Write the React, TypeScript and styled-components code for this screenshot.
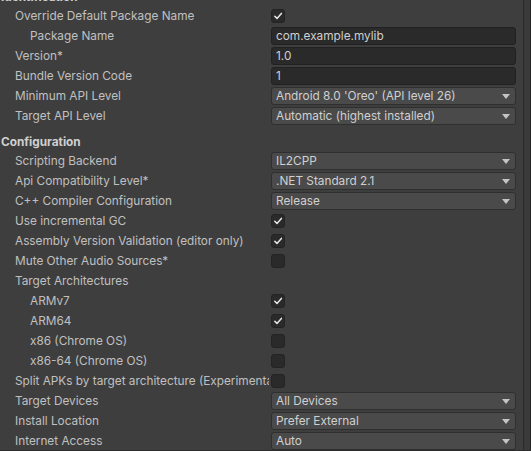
import * as React from 'react';
import styled, { createGlobalStyle } from 'styled-components';

const GlobalStyle = createGlobalStyle`
  html, body {
    margin: 0;
    padding: 0;
    background: #3e3e3e;
    overflow: hidden;
  }
  body {
    font-family: Inter, "Noto Sans", sans-serif;
    font-size: 11.8px;
    color: #c0c0c0;
  }
`;

const Window = styled.div`
  display: flex;
  width: 531px;
  height: 451px;
  box-sizing: border-box;
  border-bottom: 1px solid #2c2c2c;
  overflow: hidden;
  background: #3e3e3e;
`;

const Content = styled.div`
  flex: 1;
  display: flex;
  flex-direction: column;
  margin-top: -19px;
  padding-right: 6px;
`;

const Edge = styled.div`
  width: 6px;
  margin-left: 1px;
  border-left: 1px solid #2a2a2a;
  border-right: 1px solid #242424;
  background: #3a3a3a;
`;

const Header = styled.div`
  flex-shrink: 0;
  height: 25px;
  display: flex;
  align-items: flex-end;
  padding: 0 0 2px 1px;
  box-sizing: border-box;
  font-weight: 700;
  color: #d0d0d0;
`;

const Row = styled.div`
  flex-shrink: 0;
  height: 20px;
  display: grid;
  grid-template-columns: 269px 1fr;
  column-gap: 2px;
  align-items: center;
`;

const Label = styled.div<{ $indent?: boolean }>`
  padding-left: ${(p) => (p.$indent ? 30 : 15)}px;
  white-space: nowrap;
  overflow: hidden;
`;

const TextField = styled.div`
  height: 18px;
  box-sizing: border-box;
  display: flex;
  align-items: center;
  padding-left: 4px;
  background: #2a2a2a;
  border: 1px solid #212121;
  border-radius: 3px;
  color: #d0d0d0;
`;

const Popup = styled.div`
  height: 18px;
  box-sizing: border-box;
  display: flex;
  align-items: center;
  justify-content: space-between;
  padding: 0 4px 0 4px;
  background: #4a4a4a;
  border: 1px solid #2f2f2f;
  border-radius: 3px;
  color: #d0d0d0;
`;

const Arrow = styled.span`
  width: 0;
  height: 0;
  border-left: 4px solid transparent;
  border-right: 4px solid transparent;
  border-top: 5px solid #c4c4c4;
  margin-right: 1px;
`;

const Box = styled.div`
  width: 14px;
  height: 14px;
  box-sizing: border-box;
  background: #2a2a2a;
  border: 1px solid #232323;
  border-radius: 3px;
  display: flex;
  align-items: center;
  justify-content: center;
`;

type Field =
  | { kind: 'check'; on: boolean }
  | { kind: 'text'; value: string }
  | { kind: 'popup'; value: string }
  | { kind: 'none' };

type Item =
  | { header: string }
  | { label: string; indent?: boolean; field: Field };

const items: Item[] = [
  { header: 'Identification' },
  { label: 'Override Default Package Name', field: { kind: 'check', on: true } },
  { label: 'Package Name', indent: true, field: { kind: 'text', value: 'com.example.mylib' } },
  { label: 'Version*', field: { kind: 'text', value: '1.0' } },
  { label: 'Bundle Version Code', field: { kind: 'text', value: '1' } },
  { label: 'Minimum API Level', field: { kind: 'popup', value: "Android 8.0 'Oreo' (API level 26)" } },
  { label: 'Target API Level', field: { kind: 'popup', value: 'Automatic (highest installed)' } },
  { header: 'Configuration' },
  { label: 'Scripting Backend', field: { kind: 'popup', value: 'IL2CPP' } },
  { label: 'Api Compatibility Level*', field: { kind: 'popup', value: '.NET Standard 2.1' } },
  { label: 'C++ Compiler Configuration', field: { kind: 'popup', value: 'Release' } },
  { label: 'Use incremental GC', field: { kind: 'check', on: true } },
  { label: 'Assembly Version Validation (editor only)', field: { kind: 'check', on: true } },
  { label: 'Mute Other Audio Sources*', field: { kind: 'check', on: false } },
  { label: 'Target Architectures', field: { kind: 'none' } },
  { label: 'ARMv7', indent: true, field: { kind: 'check', on: true } },
  { label: 'ARM64', indent: true, field: { kind: 'check', on: true } },
  { label: 'x86 (Chrome OS)', indent: true, field: { kind: 'check', on: false } },
  { label: 'x86-64 (Chrome OS)', indent: true, field: { kind: 'check', on: false } },
  { label: 'Split APKs by target architecture (Experimental)', field: { kind: 'check', on: false } },
  { label: 'Target Devices', field: { kind: 'popup', value: 'All Devices' } },
  { label: 'Install Location', field: { kind: 'popup', value: 'Prefer External' } },
  { label: 'Internet Access', field: { kind: 'popup', value: 'Auto' } },
];

function Check() {
  return (
    <svg width="10" height="10" viewBox="0 0 10 10">
      <path d="M1.8 5.3 L4 7.4 L8.4 2.4" fill="none" stroke="#e6e6e6" strokeWidth="1.5" strokeLinecap="round" strokeLinejoin="round" />
    </svg>
  );
}

function renderField(f: Field) {
  switch (f.kind) {
    case 'check':
      return <Box>{f.on && <Check />}</Box>;
    case 'text':
      return <TextField>{f.value}</TextField>;
    case 'popup':
      return (
        <Popup>
          <span>{f.value}</span>
          <Arrow />
        </Popup>
      );
    default:
      return <div />;
  }
}

export default function App() {
  return (
    <>
      <GlobalStyle />
      <Window>
        <Content>
          {items.map((it, i) =>
            'header' in it ? (
              <Header key={i}>{it.header}</Header>
            ) : (
              <Row key={i}>
                <Label $indent={it.indent}>{it.label}</Label>
                {renderField(it.field)}
              </Row>
            )
          )}
        </Content>
        <Edge />
      </Window>
    </>
  );
}
